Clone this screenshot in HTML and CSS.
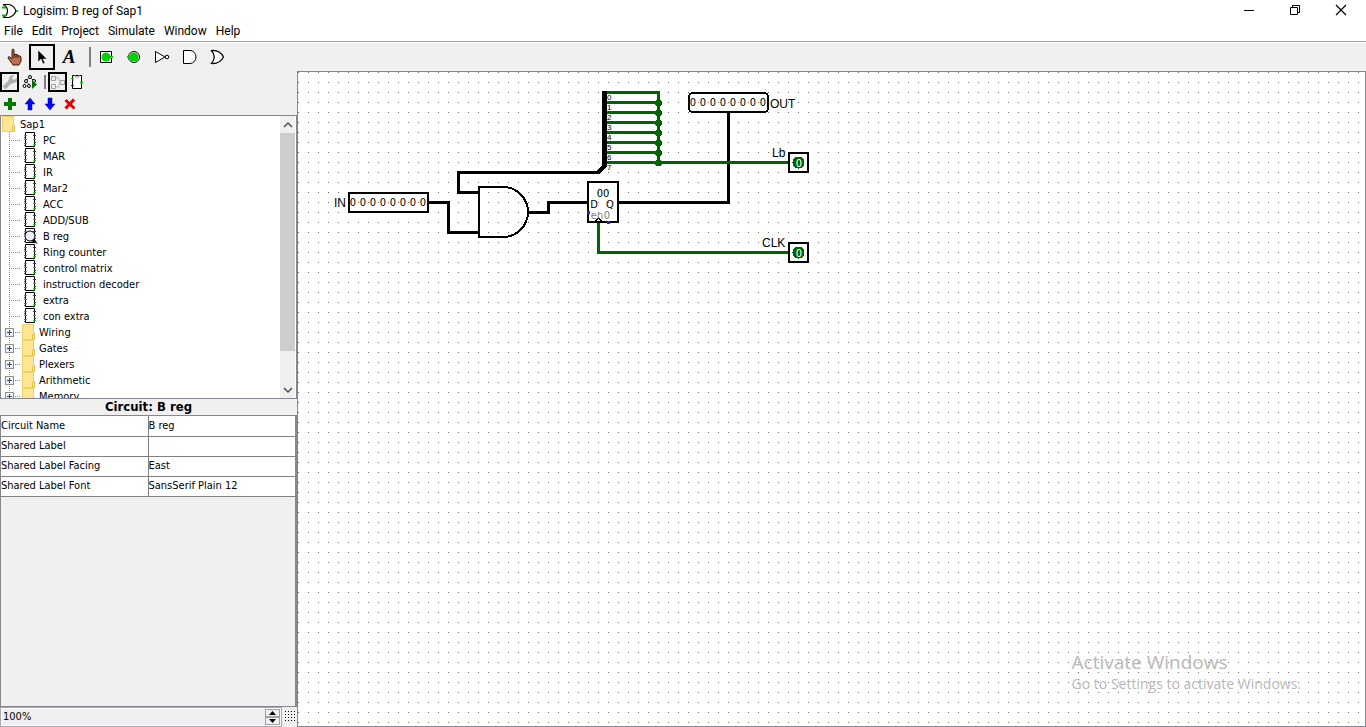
FILE: index.html
```html
<!DOCTYPE html>
<html lang="en">
<head>
<meta charset="utf-8">
<title>Logisim: B reg of Sap1</title>
<link rel="stylesheet" href="styles.css">
</head>
<body>
<svg class="defs" width="0" height="0" aria-hidden="true">
  <symbol id="chip" viewBox="0 0 16 16">
    <path d="M3.500 .5h9v14h-9z" fill="#fff" stroke="#000"/>
    <path d="M2 3h3v1H2zM2 11h3v1H2zM11 7h3v1h-3zM2 7h3v1H2zM11 12h3v1h-3z" fill="#00d000"/>
    <path d="M2 5h2v1H2zM11 3h3v1h-3zM12 10h2v1h-2zM2 13h2v1H2z" fill="#006400"/>
  </symbol>
  <symbol id="folder" viewBox="0 0 14 16">
    <path d="M.5 .5h11v9h1v6h-12z" fill="#ffe594" stroke="#f0cf62"/>
    <path d="M10.500 15.500v-5l2-1v6z" fill="#ffe9a2" stroke="#e8c04c"/>
  </symbol>
</svg>
<header class="titlebar">
  <svg class="app-icon" width="18" height="16" viewBox="0 0 18 16"><path d="M1 1.500h6q5 1 7 6.500q-2 5-7 6.500H1q4.500-2 4.500-6.500T1 1.500" fill="#fff" stroke="#000" stroke-width="1.200"/><path d="M0 4.500h4M0 12.500h4M14 8h2" stroke="#00c000" stroke-width="2"/></svg>
  <h1 class="window-title">Logisim: B reg of Sap1</h1>
  <div class="window-controls">
    <button aria-label="Minimize"><svg width="12" height="12"><path d="M1 6.500h10" stroke="#000"/></svg></button>
    <button aria-label="Restore"><svg width="12" height="12"><path d="M1.500 3.500h7v7h-7zM3.500 3.500v-2h7v7h-2" fill="none" stroke="#000"/></svg></button>
    <button aria-label="Close"><svg width="12" height="12"><path d="M1 1l10 10M11 1L1 11" stroke="#000" stroke-width="1.200"/></svg></button>
  </div>
</header>
<nav class="menubar">
  <button>File</button><button>Edit</button><button>Project</button><button>Simulate</button><button>Window</button><button>Help</button>
</nav>
<div class="toolbar">
  <button class="tool" aria-label="Poke"><svg width="18" height="18" viewBox="0 0 18 18"><path d="M6 2.500q0-1.500 1-1.500t1 1.500V7l1-1q1 0 1 1 1-1 2 0v1q2-1 3 1v4l-2 4H7L5 14 2 10q0-2 2-1l2 2z" fill="#b87050" stroke="#401808"/><path d="M8 7v3M10 7v3M12 8v2" stroke="#401808"/></svg></button>
  <button class="tool selected" aria-label="Edit"><svg width="18" height="18" viewBox="0 0 18 18"><path d="M5 2v12l3-3 2 5 2-1-2-4h4z" fill="#000" stroke="#fff" stroke-width=".5"/></svg></button>
  <button class="tool letter" aria-label="Text">A</button>
  <span class="divider"></span>
  <button class="tool" aria-label="Input pin"><svg width="16" height="16"><path d="M2.500 2.500h11v11h-11z" fill="#fff" stroke="#000"/><circle cx="8" cy="8" r="4.500" fill="#00d000"/><path d="M11 8h4" stroke="#00d000" stroke-width="2"/></svg></button>
  <button class="tool" aria-label="Output pin"><svg width="16" height="16"><circle cx="8" cy="8" r="5.500" fill="#fff" stroke="#000"/><circle cx="8" cy="8" r="4.500" fill="#00d000"/><path d="M1 8h4" stroke="#00d000" stroke-width="2"/></svg></button>
  <button class="tool" aria-label="NOT gate"><svg width="16" height="16"><path d="M1.500 2.500v11L11 8z" fill="#fff" stroke="#000"/><circle cx="13" cy="8" r="1.800" fill="#fff" stroke="#000"/></svg></button>
  <button class="tool" aria-label="AND gate"><svg width="16" height="16"><path d="M1.500 1.500H8a6 6.500 0 0 1 0 13H1.500z" fill="#fff" stroke="#000"/></svg></button>
  <button class="tool" aria-label="OR gate"><svg width="16" height="16"><path d="M1.500 1.500Q10 1 13.500 8Q10 15 1.500 14.500Q7 8 1.500 1.500z" fill="#fff" stroke="#000" stroke-width="1.200"/></svg></button>
</div>
<main class="workspace">
  <aside class="sidebar">
    <div class="side-tools">
      <button class="small selected" aria-label="Toolbox"><svg width="16" height="16"><path d="M2 14L9 7" stroke="#b0b0b0" stroke-width="4"/><path d="M15 4l-3 2-2-2 2-3q-5 0-5 4l-1 3 3 2 3-1q4-1 3-5z" fill="#b0b0b0"/></svg></button>
      <button class="small" aria-label="Simulation"><svg width="16" height="16"><path d="M8 3L4 7 2 12M4 7l4 5M8 3l4 4" stroke="#000" stroke-dasharray="2 1" fill="none"/><g fill="#fff" stroke="#000"><circle cx="8" cy="3" r="1.500"/><circle cx="4" cy="7" r="1.500"/><circle cx="12" cy="7" r="1.500"/><circle cx="2.500" cy="12" r="1.500"/><circle cx="7" cy="12" r="1.500"/></g><path d="M10 6v9l5-4.500z" fill="#007000"/></svg></button>
      <span class="divider short"></span>
      <button class="small selected" aria-label="Layout"><svg width="16" height="16"><path d="M6 4h3v3h2M6 13h3V9h2" stroke="#a0d0a0" fill="none"/><path d="M1.500 2.500h4v4h-4zM1.500 10.500h4v4h-4zM10.500 6.500h4v4h-4z" fill="#eee" stroke="#a0a0a0"/></svg></button>
      <button class="small" aria-label="Appearance"><svg width="16" height="16"><path d="M3.500 1.500h9v13h-9z" fill="#fff" stroke="#000"/><path d="M6 1v2h4V1" fill="none" stroke="#999"/><path d="M2 4h3v1H2zM11 8h3v1h-3z" fill="#00d000"/><path d="M2 11h3v1H2z" fill="#006400"/></svg></button>
    </div>
    <div class="side-actions">
      <button aria-label="Add circuit"><svg width="14" height="14"><path d="M5 1h4v4h4v4H9v4H5V9H1V5h4z" fill="#007a00"/></svg></button>
      <button aria-label="Move up"><svg width="14" height="14"><path d="M7 1l5 6H9v6H5V7H2z" fill="#00f" stroke="#0000a0" stroke-width=".5"/></svg></button>
      <button aria-label="Move down"><svg width="14" height="14"><path d="M7 13L2 7h3V1h4v6h3z" fill="#00f" stroke="#0000a0" stroke-width=".5"/></svg></button>
      <button aria-label="Delete"><svg width="14" height="14"><path d="M2.500 3l9 8.500M11 2.500L2.500 11.500" stroke="#e00000" stroke-width="3"/></svg></button>
    </div>
    <div class="explorer">
      <div class="tree">
        <div class="root"><svg width="14" height="16"><use href="#folder"/></svg>Sap1</div>
        <ul class="circuits">
          <li><svg width="16" height="16"><use href="#chip"/></svg>PC</li>
          <li><svg width="16" height="16"><use href="#chip"/></svg>MAR</li>
          <li><svg width="16" height="16"><use href="#chip"/></svg>IR</li>
          <li><svg width="16" height="16"><use href="#chip"/></svg>Mar2</li>
          <li><svg width="16" height="16"><use href="#chip"/></svg>ACC</li>
          <li><svg width="16" height="16"><use href="#chip"/></svg>ADD/SUB</li>
          <li><svg width="16" height="16"><use href="#chip"/><circle cx="8" cy="8" r="5" fill="#eef" stroke="#000"/><path d="M9 13l3-2 4 5z"/></svg>B reg</li>
          <li><svg width="16" height="16"><use href="#chip"/></svg>Ring counter</li>
          <li><svg width="16" height="16"><use href="#chip"/></svg>control matrix</li>
          <li><svg width="16" height="16"><use href="#chip"/></svg>instruction decoder</li>
          <li><svg width="16" height="16"><use href="#chip"/></svg>extra</li>
          <li><svg width="16" height="16"><use href="#chip"/></svg>con extra</li>
        </ul>
        <ul class="libraries">
          <li><button aria-label="Expand Wiring"></button><svg width="14" height="16"><use href="#folder"/></svg>Wiring</li>
          <li><button aria-label="Expand Gates"></button><svg width="14" height="16"><use href="#folder"/></svg>Gates</li>
          <li><button aria-label="Expand Plexers"></button><svg width="14" height="16"><use href="#folder"/></svg>Plexers</li>
          <li><button aria-label="Expand Arithmetic"></button><svg width="14" height="16"><use href="#folder"/></svg>Arithmetic</li>
          <li><button aria-label="Expand Memory"></button><svg width="14" height="16"><use href="#folder"/></svg>Memory</li>
        </ul>
      </div>
      <div class="scrollbar">
        <button aria-label="Scroll up"><svg width="10" height="8"><path d="M1 6l4-4 4 4" fill="none" stroke="#505050" stroke-width="1.500"/></svg></button>
        <div class="track"><div class="thumb"></div></div>
        <button aria-label="Scroll down"><svg width="10" height="8"><path d="M1 2l4 4 4-4" fill="none" stroke="#505050" stroke-width="1.500"/></svg></button>
      </div>
    </div>
    <h2 class="attr-title">Circuit: B reg</h2>
    <div class="attr-panel">
      <table class="attrs">
        <tr><th scope="row">Circuit Name</th><td>B reg</td></tr>
        <tr><th scope="row">Shared Label</th><td></td></tr>
        <tr><th scope="row">Shared Label Facing</th><td>East</td></tr>
        <tr><th scope="row">Shared Label Font</th><td>SansSerif Plain 12</td></tr>
      </table>
    </div>
    <div class="zoombar">
      <div class="spinner">
        <input type="text" value="100%" aria-label="Zoom">
        <div class="steps">
          <button aria-label="Zoom in"><svg width="7" height="4"><path d="M3.500 0L7 4H0z"/></svg></button>
          <button aria-label="Zoom out"><svg width="7" height="4"><path d="M0 0h7L3.500 4z"/></svg></button>
        </div>
      </div>
      <button class="grid-toggle" aria-label="Show grid"></button>
    </div>
  </aside>
  <section class="canvas" aria-label="Circuit canvas">
    <svg class="circuit" width="530" height="208" viewBox="298 72 530 208">
      <g class="wire bus">
        <path d="M429 202.500h19.500v30H479M479 192.500h-20.500v-20H600M528 212.500h20.500v-10H588M619 202.500h109.500V113"/>
      </g>
      <path d="M602 91h5v75l-8 8h-5v-3l3-.5 5-5z"/>
      <g class="wire low">
        <path d="M607 92.500h51.500V162M607 102.500h51M607 112.500h51M607 122.500h51M607 132.500h51M607 142.500h51M607 152.500h51M607 162.500h182M598.500 223v29.500H789"/>
      </g>
      <g class="joint">
        <circle cx="658.500" cy="102.500" r="3.500"/><circle cx="658.500" cy="112.500" r="3.500"/><circle cx="658.500" cy="122.500" r="3.500"/><circle cx="658.500" cy="132.500" r="3.500"/><circle cx="658.500" cy="142.500" r="3.500"/><circle cx="658.500" cy="152.500" r="3.500"/><circle cx="658.500" cy="162.500" r="3.500"/>
      </g>
      <g class="outline">
        <rect x="349" y="193" width="79" height="19"/>
        <rect x="689" y="93" width="79" height="19" rx="4"/>
        <path d="M503 187H479v50h24a25 25 0 0 0 0-50z"/>
        <rect x="588" y="182" width="30" height="40"/>
        <rect x="789" y="153" width="19" height="19"/>
        <rect x="789" y="243" width="19" height="19"/>
      </g>
      <path d="M595 222l3.500-4 3.500 4" fill="none" stroke="#000" stroke-width="1.500"/>
      <path class="port" d="M587 211h3v3h-3zM607 221h3v3h-3z"/>
      <circle class="low-fill" cx="798.500" cy="162.500" r="6"/>
      <circle class="low-fill" cx="798.500" cy="252.500" r="6"/>
      <g class="bits">
        <text x="353 363 373 383 393 403 413 423" y="206">00000000</text>
        <text x="693 703 713 723 733 743 753 763" y="106">00000000</text>
        <text x="603" y="197">00</text>
        <text x="594" y="208">D</text>
        <text x="610" y="208">Q</text>
      </g>
      <g class="bits faint"><text x="597" y="219">en</text><text x="607" y="219">0</text></g>
      <g class="bits value"><text x="799" y="167">0</text><text x="799" y="257">0</text></g>
      <g class="labels">
        <text x="334" y="207">IN</text><text x="770" y="108">OUT</text><text x="772" y="157">Lb</text><text x="762" y="247">CLK</text>
      </g>
      <g class="indexes">
        <text x="607" y="100">0</text><text x="607" y="110">1</text><text x="607" y="120">2</text><text x="607" y="130">3</text><text x="607" y="140">4</text><text x="607" y="150">5</text><text x="607" y="160">6</text><text x="607" y="170">7</text>
      </g>
    </svg>
    <div class="watermark"><p class="activate">Activate Windows</p><p class="settings">Go to Settings to activate Windows.</p></div>
  </section>
</main>
</body>
</html>
```
FILE: styles.css
```css
* { box-sizing: border-box; }
body {
  margin: 0;
  height: 100vh;
  display: flex;
  flex-direction: column;
  overflow: hidden;
  background: #fff;
  color: #000;
  font: 11px/16px "DejaVu Sans Condensed", "DejaVu Sans", sans-serif;
}
svg { display: block; flex: none; }
.defs { position: absolute; }
h1, h2, p, ul { margin: 0; padding: 0; font-weight: normal; list-style: none; }
button {
  margin: 0;
  padding: 0;
  border: 0;
  background: none;
  color: inherit;
  font: inherit;
  display: flex;
  align-items: center;
  justify-content: center;
}

.titlebar { display: flex; align-items: center; height: 21px; padding-left: 2px; gap: 3px; }
.window-title { flex: 1; font: 12px/20px Roboto, sans-serif; }
.window-controls { display: flex; align-self: flex-start; padding-right: 2px; }
.window-controls button { width: 46px; height: 19px; }

.menubar {
  display: flex;
  gap: 9px;
  height: 21px;
  padding-left: 4px;
  border-bottom: 1px solid #a0a0a0;
  font: 12px/20px Roboto, sans-serif;
}

.toolbar {
  display: flex;
  align-items: center;
  height: 29px;
  margin-top: 1px;
  padding: 0 1px 2px;
  background: #f0f0f0;
}
.tool { width: 28px; height: 26px; }
.toolbar .selected { width: 26px; border: 2px solid #000; }
.letter { font: italic bold 19px/24px "Liberation Serif", serif; }
.divider { width: 2px; height: 20px; margin: 0 1px 0 6px; background: #808080; }
.divider.short { height: 14px; margin: 0 2px 0 5px; }

.workspace { flex: 1; min-height: 0; display: flex; background: #f0f0f0; }
.sidebar { width: 297px; flex: none; display: flex; flex-direction: column; }
.side-tools { display: flex; align-items: center; height: 20px; }
.small { width: 19px; height: 20px; }
.small:first-child { margin-right: 1px; }
.side-tools .selected { border: 2px solid #000; }
.side-actions { display: flex; height: 23px; align-items: center; }
.side-actions button { width: 20px; }

.explorer {
  flex: 0 0 284px;
  min-height: 0;
  display: flex;
  padding-right: 1px;
  border: 1px solid #828790;
  background: #fff;
}
.tree { flex: 1; overflow: hidden; padding-left: 1px; line-height: 18px; }
.root { display: flex; gap: 4px; height: 16px; }
.circuits, .libraries {
  margin-left: 7px;
  background: repeating-linear-gradient(#888 0 1px, transparent 1px 2px) 0 0 / 1px 100% no-repeat;
}
.circuits li, .libraries li {
  display: flex;
  height: 16px;
  background: repeating-linear-gradient(90deg, #888 0 1px, transparent 1px 2px) 0 8px / 12px 1px no-repeat;
}
.circuits li { padding-left: 13px; gap: 5px; }
.libraries { margin-left: 3px; background-position: 4px 0; }
.libraries li { gap: 3px; background-position: 4px 8px; }
.libraries button {
  width: 9px;
  height: 9px;
  margin: 4px 5px 0 0;
  border: 1px solid #909090;
  background:
    linear-gradient(#304890, #304890) center / 5px 1px no-repeat,
    linear-gradient(#304890, #304890) center / 1px 5px no-repeat,
    #f4f4f4;
}
.scrollbar { width: 15px; display: flex; flex-direction: column; background: #f0f0f0; }
.scrollbar button { height: 17px; }
.track { flex: 1; }
.thumb { height: 88%; background: #cdcdcd; }

.attr-title { font: bold 13px/16px "DejaVu Sans Condensed", "DejaVu Sans", sans-serif; text-align: center; }
.attr-panel { flex: 1; border: 1px solid #828790; border-width: 1px 2px 1px 1px; }
.attrs { width: 100%; border-collapse: collapse; table-layout: fixed; background: #fff; }
.attrs th, .attrs td {
  height: 20px;
  padding: 0;
  border-bottom: 1px solid #808080;
  text-align: left;
  font-weight: normal;
}
.attrs td { border-left: 1px solid #808080; }

.zoombar { display: flex; height: 20px; gap: 3px; }
.spinner { flex: 0 0 282px; display: flex; border: 1px solid #a8a8b0; background: #fff; padding: 1px; }
.spinner input { flex: 1; min-width: 0; border: 0; padding: 0 1px; background: #f0f0f0; font: inherit; }
.steps { width: 15px; display: flex; flex-direction: column; }
.steps button { flex: 1; border: 1px solid #a0a0a0; background: #f0f0f0; }
.grid-toggle {
  width: 11px;
  height: 11px;
  margin-top: 4px;
  background: conic-gradient(from 0deg at 1px 1px, transparent 75%, #000 0) 0 0 / 3px 3px;
}

.canvas {
  flex: 1;
  position: relative;
  overflow: hidden;
  margin-top: -1px;
  border: 1px solid #828790;
  background: conic-gradient(from 0deg at 1px 1px, transparent 75%, #707070 0) 0 0 / 10px 10px, #fff;
}
.circuit { shape-rendering: crispEdges; }
.wire { fill: none; stroke-width: 3; }
.bus { stroke: #000; }
.low { stroke: #006400; }
.joint, .low-fill { fill: #006400; }
.outline { fill: none; stroke: #000; stroke-width: 2; }
.port { fill: #2020ff; }
.bits { font: 11px "DejaVu Sans Condensed", "DejaVu Sans", sans-serif; text-anchor: middle; }
.faint { fill: #808080; }
.value { fill: #fff; }
.labels { font: 12px "Liberation Sans", sans-serif; }
.indexes { font: 8px "Liberation Sans", sans-serif; }
.watermark {
  position: absolute;
  right: 64px;
  bottom: 32px;
  color: #b8b8b8;
  font-family: "Open Sans", sans-serif;
}
.activate { font-size: 19px; line-height: 24px; }
.settings { font-size: 14px; line-height: 20px; }
```
